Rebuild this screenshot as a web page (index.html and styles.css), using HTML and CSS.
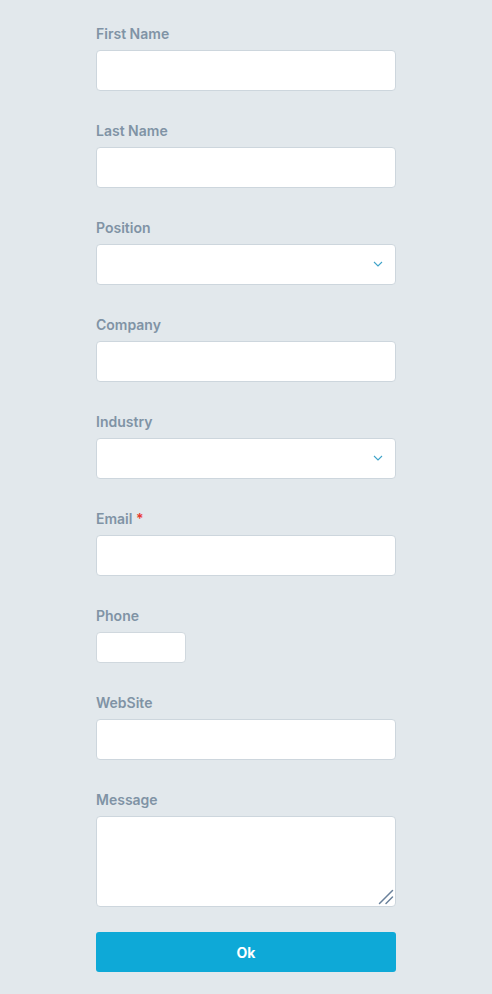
FILE: index.html
```html
<!DOCTYPE html>
<html lang="en">
<head>
  <meta charset="UTF-8">
  <meta name="viewport" content="width=device-width, initial-scale=1.0">
  <title>Contact Form</title>
  <link rel="stylesheet" href="styles.css">
</head>
<body>

  <form class="contact-form">
    <div class="field">
      <label class="label">First Name</label>
      <input class="input" type="text">
    </div>

    <div class="field">
      <label class="label">Last Name</label>
      <input class="input" type="text">
    </div>

    <div class="field">
      <label class="label">Position</label>
      <div class="select-wrap">
        <select class="input select"></select>
        <svg class="chevron" width="10" height="6" viewBox="0 0 10 6">
          <path d="M1 1 L5 5 L9 1" fill="none" stroke="#3fa3c9" stroke-width="1.1"/>
        </svg>
      </div>
    </div>

    <div class="field">
      <label class="label">Company</label>
      <input class="input" type="text">
    </div>

    <div class="field">
      <label class="label">Industry</label>
      <div class="select-wrap">
        <select class="input select"></select>
        <svg class="chevron" width="10" height="6" viewBox="0 0 10 6">
          <path d="M1 1 L5 5 L9 1" fill="none" stroke="#3fa3c9" stroke-width="1.1"/>
        </svg>
      </div>
    </div>

    <div class="field">
      <label class="label">Email <span class="required">*</span></label>
      <input class="input" type="email">
    </div>

    <div class="field">
      <label class="label">Phone</label>
      <input class="input phone" type="tel">
    </div>

    <div class="field">
      <label class="label">WebSite</label>
      <input class="input" type="text">
    </div>

    <div class="field message">
      <label class="label">Message</label>
      <div class="textarea-wrap">
        <textarea class="input textarea"></textarea>
        <svg class="grip" width="16" height="16" viewBox="0 0 16 16">
          <path d="M1.5 14.5 L14.5 1.5 M8 14.5 L14.5 8" stroke="#6a819b" stroke-width="1.5" stroke-linecap="round"/>
        </svg>
      </div>
    </div>

    <button class="btn" type="button">Ok</button>
  </form>

</body>
</html>
```

FILE: styles.css
```css
* {
  box-sizing: border-box;
}

body {
  margin: 0;
  background-color: #e2e8ec;
  font-family: Inter, "Noto Sans", sans-serif;
}

.contact-form {
  width: 300px;
  margin: 0 auto;
  padding-top: 24px;
  display: flex;
  flex-direction: column;
}

.field {
  display: flex;
  flex-direction: column;
  margin-bottom: 30px;
}

.field.message {
  margin-bottom: 25px;
}

.label {
  font-size: 14px;
  font-weight: 600;
  line-height: 20px;
  color: #8093a5;
  margin-bottom: 6px;
}

.required {
  color: #e8392f;
}

.input {
  display: block;
  width: 100%;
  height: 41px;
  background-color: #ffffff;
  border: 1px solid #cdd6dd;
  border-radius: 4px;
  font-family: inherit;
  font-size: 14px;
  padding: 0 12px;
  outline: none;
}

.select-wrap,
.textarea-wrap {
  position: relative;
}

.select {
  appearance: none;
  -webkit-appearance: none;
}

.chevron {
  position: absolute;
  right: 13px;
  top: 17px;
  pointer-events: none;
}

.phone {
  width: 90px;
  height: 31px;
  border: 1px solid #d0d8de;
}

.textarea {
  height: 91px;
  resize: none;
  padding: 10px 12px;
}

.grip {
  position: absolute;
  right: 2px;
  bottom: 2px;
  pointer-events: none;
}

.btn {
  width: 100%;
  height: 40px;
  background-color: #0ea9d7;
  color: #ffffff;
  border: none;
  border-radius: 3px;
  font-family: inherit;
  font-size: 14px;
  font-weight: 700;
  cursor: pointer;
}
```
